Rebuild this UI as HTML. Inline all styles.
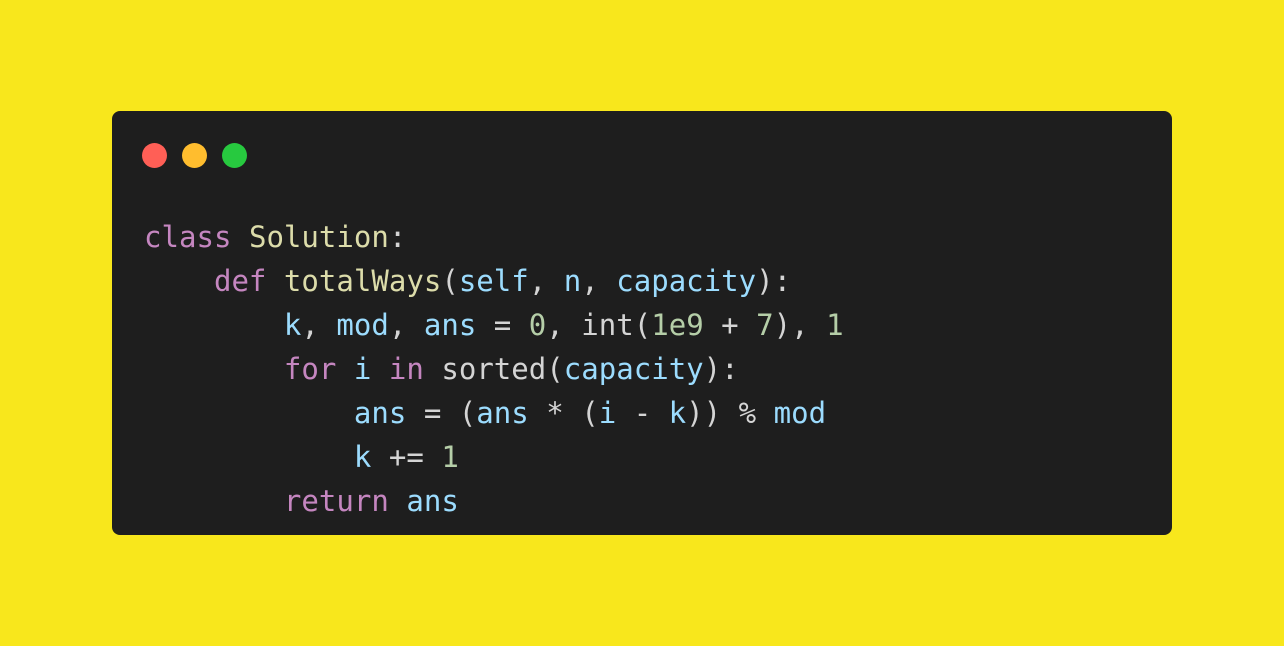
<!DOCTYPE html>
<html><head><style>
html,body{margin:0;padding:0;}
body{width:1284px;height:646px;background:#f8e71c;position:relative;overflow:hidden;}
.card{position:absolute;left:112px;top:111px;width:1060px;height:424px;background:#1e1e1e;border-radius:8px;}
.dot{position:absolute;top:143px;width:25px;height:25px;border-radius:50%;}
pre{position:absolute;left:144px;top:215px;margin:0;font-family:"DejaVu Sans Mono","Liberation Mono",monospace;font-size:29.05px;line-height:44px;color:#d4d4d4;}
.k{color:#c586c0}.f{color:#dcdcaa}.v{color:#9cdcfe}.n{color:#b5cea8}
</style></head><body>
<div class="card"></div>
<div class="dot" style="left:142px;background:#ff5f56"></div>
<div class="dot" style="left:182px;background:#ffbd2e"></div>
<div class="dot" style="left:222px;background:#27c93f"></div>
<pre><span class="k">class</span> <span class="f">Solution</span>:
    <span class="k">def</span> <span class="f">totalWays</span>(<span class="v">self</span>, <span class="v">n</span>, <span class="v">capacity</span>):
        <span class="v">k</span>, <span class="v">mod</span>, <span class="v">ans</span> = <span class="n">0</span>, int(<span class="n">1e9</span> + <span class="n">7</span>), <span class="n">1</span>
        <span class="k">for</span> <span class="v">i</span> <span class="k">in</span> sorted(<span class="v">capacity</span>):
            <span class="v">ans</span> = (<span class="v">ans</span> * (<span class="v">i</span> - <span class="v">k</span>)) % <span class="v">mod</span>
            <span class="v">k</span> += <span class="n">1</span>
        <span class="k">return</span> <span class="v">ans</span></pre>
</body></html>
